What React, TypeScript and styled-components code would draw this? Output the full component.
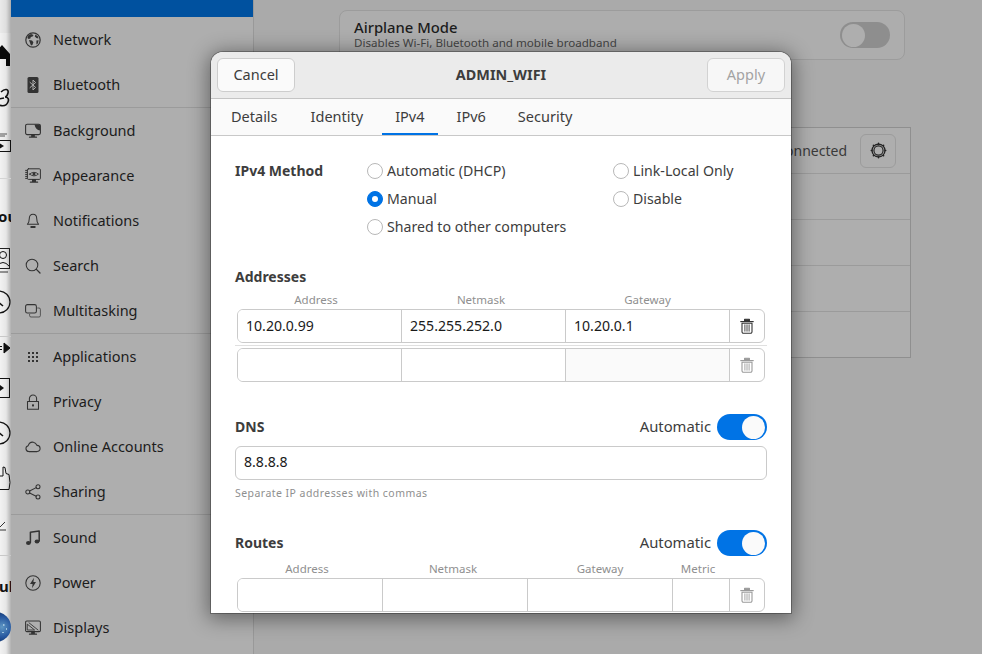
import React from 'react';
import styled, { createGlobalStyle } from 'styled-components';

const Font = '"Noto Sans", "Open Sans", sans-serif';

const GlobalStyle = createGlobalStyle`
  html, body {
    margin: 0;
    height: 100%;
    overflow: hidden;
    background: #aaaaaa;
    font-family: ${Font};
  }
  * { box-sizing: border-box; }
`;

const Page = styled.div`
  position: relative;
  display: flex;
  width: 982px;
  height: 654px;
  overflow: hidden;
`;

/* sliver of the window behind the settings app */
const Strip = styled.div`
  flex: 0 0 11px;
  display: flex;
  flex-direction: column;
  overflow: hidden;
  background: linear-gradient(to right, #f2f2f2 0%, #e6e6e6 55%, #b2b2b2 100%);
  svg { display: block; flex: none; }
`;

const StripText = styled.div<{ $h: number; $shift: number }>`
  flex: none;
  height: ${p => p.$h}px;
  line-height: ${p => p.$h}px;
  margin-left: ${p => p.$shift}px;
  font-size: 15px;
  font-weight: 700;
  color: #111;
  white-space: nowrap;
`;

const Sidebar = styled.nav`
  flex: 0 0 243px;
  background: #aeaeae;
  border-right: 1px solid #999;
`;

const SelectedRow = styled.div`
  height: 17px;
  background: #00519f;
`;

const SideGroup = styled.div`
  border-bottom: 1px solid #9b9b9b;
  &:last-child { border-bottom: 0; }
`;

const SideRow = styled.div`
  display: flex;
  align-items: center;
  height: 45px;
  padding-left: 14px;
  gap: 12px;
  font-size: 14.5px;
  color: #1c1c1c;
  svg { flex: none; color: #333; }
`;

const SideLabel = styled.span`
  margin-bottom: 2px;
`;

const Main = styled.main`
  flex: 1;
  padding: 10px 0 0 85px;
  background: #aaaaaa;
`;

const AirplaneCard = styled.section`
  display: flex;
  align-items: center;
  justify-content: space-between;
  width: 566px;
  height: 50px;
  padding: 0 14px;
  background: #adadad;
  border: 1px solid #9c9c9c;
  border-radius: 8px;
`;

const CardText = styled.div`
  margin-bottom: 2px;
`;

const CardTitle = styled.div`
  font-size: 14.8px;
  font-weight: 500;
  line-height: 18px;
  color: #1c1c1c;
`;

const CardHint = styled.div`
  font-size: 11.6px;
  line-height: 14px;
  color: #454545;
`;

const NetworkTable = styled.section`
  width: 572px;
  margin-top: 67px;
  border: 1px solid #8f8f8f;
  background: #aeaeae;
`;

const NetworkRow = styled.div`
  display: flex;
  align-items: center;
  justify-content: flex-end;
  gap: 13px;
  height: 46px;
  padding-right: 14px;
  border-bottom: 1px solid #9b9b9b;
  font-size: 14px;
  color: #3a3a3a;
  &:last-child { border-bottom: 0; height: 45px; }
`;

const GearButton = styled.div`
  display: flex;
  align-items: center;
  justify-content: center;
  width: 36px;
  height: 34px;
  border: 1px solid #9c9c9c;
  border-radius: 6px;
  color: #222;
`;

const Dialog = styled.div`
  position: absolute;
  left: 211px;
  top: 52px;
  width: 580px;
  height: 561px;
  overflow: hidden;
  background: #fff;
  border-radius: 12px 12px 0 0;
  box-shadow: 0 0 0 1px rgba(0, 0, 0, 0.28), 0 3px 20px 3px rgba(0, 0, 0, 0.42);
  color: #3d3d3d;
`;

const DialogHeader = styled.header`
  display: flex;
  align-items: center;
  justify-content: space-between;
  height: 47px;
  padding: 0 6px;
  background: #ebebeb;
  border-bottom: 1px solid #c4c4c4;
`;

const HeaderButton = styled.div<{ $disabled?: boolean }>`
  display: flex;
  align-items: center;
  justify-content: center;
  width: 78px;
  height: 34px;
  padding-bottom: 2px;
  background: ${p => (p.$disabled ? '#f7f7f7' : '#fafafa')};
  border: 1px solid ${p => (p.$disabled ? '#d2d2d2' : '#cdcdcd')};
  border-radius: 6px;
  font-size: 14.5px;
  color: ${p => (p.$disabled ? '#a3a3a3' : '#3d3d3d')};
`;

const DialogTitle = styled.div`
  margin-bottom: 2px;
  font-size: 14.4px;
  font-weight: 700;
`;

const TabBar = styled.div`
  display: flex;
  height: 37px;
  padding-left: 7px;
  gap: 6px;
  background: #fafafa;
  border-bottom: 1px solid #c8c8c8;
`;

const Tab = styled.div<{ $active?: boolean }>`
  display: flex;
  align-items: center;
  padding: 0 13px;
  height: 36px;
  font-size: 14.5px;
  color: #3d3d3d;
  border-bottom: 2px solid ${p => (p.$active ? '#0073e5' : 'transparent')};
  &:nth-child(2) { margin-left: 1px; }
`;

const DialogBody = styled.div`
  padding: 24px 24px 0;
`;

const MethodRow = styled.div`
  display: flex;
`;

const SectionTitle = styled.div`
  font-size: 14px;
  font-weight: 700;
  line-height: 22px;
`;

const MethodTitle = styled(SectionTitle)`
  flex: 0 0 132px;
`;

const RadioColumn = styled.div<{ $w?: number }>`
  display: flex;
  flex-direction: column;
  gap: 6px;
  flex: 0 0 ${p => p.$w ?? 150}px;
`;

const RadioRow = styled.div`
  display: flex;
  align-items: center;
  gap: 4px;
  height: 22px;
  font-size: 14.15px;
`;

const RadioLabel = styled.span`
  margin-bottom: 2px;
`;

const RadioDot = styled.span<{ $on?: boolean }>`
  display: flex;
  align-items: center;
  justify-content: center;
  width: 16px;
  height: 16px;
  border-radius: 50%;
  background: ${p => (p.$on ? '#0073e5' : '#fff')};
  border: 1px solid ${p => (p.$on ? '#0073e5' : '#b8b8b8')};
  &::after {
    content: '';
    display: ${p => (p.$on ? 'block' : 'none')};
    width: 6px;
    height: 6px;
    border-radius: 50%;
    background: #fff;
  }
`;

const PlainSection = styled.div<{ $top: number }>`
  margin-top: ${p => p.$top}px;
`;

const SwitchHeader = styled.div<{ $top: number }>`
  display: flex;
  align-items: center;
  height: 26px;
  margin-top: ${p => p.$top}px;
`;

const AutoLabel = styled.div`
  margin: 0 6px 2px auto;
  font-size: 14.8px;
`;

const Switch = styled.div<{ $on?: boolean }>`
  display: flex;
  justify-content: ${p => (p.$on ? 'flex-end' : 'flex-start')};
  align-items: center;
  width: 50px;
  height: 26px;
  padding: 1px 2px;
  border-radius: 13px;
  background: ${p => (p.$on ? '#0073e5' : '#8e8e8e')};
  &::after {
    content: '';
    width: 23px;
    height: 23px;
    border-radius: 50%;
    background: ${p => (p.$on ? '#fafafa' : '#aeaeae')};
  }
`;

const ColumnHeads = styled.div<{ $cols: string; $top: number }>`
  display: grid;
  grid-template-columns: ${p => p.$cols};
  height: 18px;
  margin: ${p => p.$top}px 2px 0;
  font-size: 11.5px;
  line-height: 18px;
  color: #8f8f8f;
  text-align: center;
`;

const EntryRow = styled.div<{ $cols: string }>`
  display: grid;
  grid-template-columns: ${p => p.$cols};
  height: 34px;
  margin: 0 2px;
  border: 1px solid #cacaca;
  border-radius: 6px;
  overflow: hidden;
`;

const EntryCell = styled.div<{ $shaded?: boolean }>`
  display: flex;
  align-items: center;
  padding: 0 0 2px 8px;
  font-size: 14.1px;
  color: #1a1a1a;
  background: ${p => (p.$shaded ? '#fafafa' : '#fff')};
  border-right: 1px solid #cacaca;
`;

const DeleteCell = styled.div<{ $dim?: boolean }>`
  display: flex;
  align-items: center;
  justify-content: center;
  color: ${p => (p.$dim ? '#9a9a9a' : '#333')};
`;

const RowRule = styled.div`
  height: 1px;
  margin: 2px 0;
  background: #e0e0e0;
`;

const TextInput = styled.div`
  display: flex;
  align-items: center;
  height: 34px;
  margin-top: 6px;
  padding: 0 0 3px 8px;
  border: 1px solid #cacaca;
  border-radius: 6px;
  font-size: 14.1px;
  color: #1a1a1a;
`;

const Hint = styled.div`
  margin-top: 5px;
  font-size: 10.5px;
  line-height: 16px;
  letter-spacing: 0.45px;
  color: #8f8f8f;
`;

const Icon: React.FC<{ children: React.ReactNode; size?: number }> = ({ children, size = 16 }) => (
  <svg
    width={size}
    height={size}
    viewBox="0 0 16 16"
    fill="none"
    stroke="currentColor"
    strokeWidth="1"
    strokeLinecap="round"
    strokeLinejoin="round"
  >
    {children}
  </svg>
);

const GlobeIcon = () => (
  <Icon>
    <circle cx="8" cy="8" r="7.2" strokeWidth="1.2" />
    <path
      d="M3 3.6 6 2l2.6 1-1 1.6-1.8.4-.4 1.6L3.6 7 2.4 6zM4 8l3 .6 1.4 1.6L7.4 13 6 13.4 5 11zM10.4 2.6l2.6 2 .4 2-2-.6-1.6-1.6zM11.4 8.6l2.2-.4-.6 3-1.6 1.2z"
      fill="currentColor"
      stroke="none"
    />
  </Icon>
);

const BluetoothIcon = () => (
  <Icon>
    <rect x="2.5" y="0" width="11" height="16" rx="1.5" fill="currentColor" stroke="none" />
    <path d="M5 5.4 10.6 10.4 8 13V3l2.6 2.6L5 10.6" stroke="#aeaeae" strokeWidth="1" />
  </Icon>
);

const BackgroundIcon = () => (
  <Icon>
    <rect x="0.6" y="1.2" width="14.8" height="10.4" rx="1.6" strokeWidth="1.1" />
    <path d="M9.5 1.4h4.6l1.1 1v5.2Q10.500 7 9.500 1.400z" fill="currentColor" stroke="none" />
    <path d="M6.800 11.800h2.400v2H6.800zM4.500 14.200h7" strokeWidth="1.2" fill="currentColor" />
  </Icon>
);

const AppearanceIcon = () => (
  <Icon>
    <rect x="2.4" y="0.8" width="13" height="10.6" rx="1" strokeWidth="1" />
    <path d="M0.6 2.4h1.4M0.6 4.4h1.4M0.6 6.4h1.4M0.6 8.4h1.4M0.6 10.4h1.4" strokeWidth="1" />
    <path d="M4.6 6.1Q9 2.4 13.4 6.1 9 9.8 4.6 6.1z" strokeWidth="0.9" />
    <circle cx="9" cy="6.1" r="1.5" fill="currentColor" stroke="none" />
    <path d="M7.6 11.6h2.8v2H7.6zM5.4 14.2h7.2" strokeWidth="1.2" fill="currentColor" />
  </Icon>
);

const BellIcon = () => (
  <Icon>
    <path d="M8 1.2c-2.6 0-3.7 2-3.7 4.3 0 2.8-.8 4.6-1.900 5.800h11.200c-1.100-1.200-1.900-3-1.900-5.800C11.700 3.200 10.600 1.200 8 1.200z" strokeWidth="1.05" />
    <path d="M6.200 14h3.600" strokeWidth="1.8" />
  </Icon>
);

const SearchIcon = () => (
  <Icon>
    <circle cx="7" cy="7" r="5.8" strokeWidth="1.05" />
    <path d="m11.4 11.4 3.6 3.6" strokeWidth="1.3" />
  </Icon>
);

const WindowsIcon = () => (
  <Icon>
    <rect x="0.6" y="1.6" width="10.8" height="8.4" rx="1.8" strokeWidth="1.05" />
    <path d="M12.6 5H14a1.4 1.4 0 0 1 1.4 1.4v6.2a1.4 1.4 0 0 1-1.4 1.4H6a1.4 1.4 0 0 1-1.4-1.4V11.4" strokeWidth="0.9" opacity="0.8" />
  </Icon>
);

const AppsIcon = () => (
  <Icon>
    {[3, 7, 11].map(y =>
      [3, 7, 11].map(x => <rect key={`${x}-${y}`} x={x} y={y} width="2" height="2" fill="currentColor" stroke="none" />),
    )}
  </Icon>
);

const LockIcon = () => (
  <Icon>
    <rect x="2.5" y="7.4" width="11" height="7.8" strokeWidth="1.05" />
    <path d="M4.4 7.2V4.6a3.6 3.6 0 0 1 7.2 0v2.600" strokeWidth="1.05" />
    <rect x="7" y="10.4" width="2" height="2" fill="currentColor" stroke="none" />
  </Icon>
);

const CloudIcon = () => (
  <Icon>
    <path d="M3.8 12.6a3 3 0 0 1-.6-5.9C4 4.2 6 2.8 8.4 3.2c1.8.3 3 1.6 3.5 3.2a3.1 3.1 0 0 1 .2 6.2z" strokeWidth="1.05" />
  </Icon>
);

const ShareIcon = () => (
  <Icon>
    <circle cx="2.8" cy="8" r="2" strokeWidth="1.05" />
    <circle cx="13" cy="2.8" r="2" strokeWidth="1.05" />
    <circle cx="13" cy="13" r="2" strokeWidth="1.05" />
    <path d="m4.6 7 6.6-3.4M4.6 9l6.6 3.2" strokeWidth="1.05" />
  </Icon>
);

const MusicIcon = () => (
  <Icon>
    <path d="M5.4 12.4V2.200L14.200 1v10" strokeWidth="1.5" />
    <ellipse cx="3.4" cy="13" rx="2.4" ry="2" fill="currentColor" stroke="none" />
    <ellipse cx="12" cy="11.6" rx="2.4" ry="2" fill="currentColor" stroke="none" />
  </Icon>
);

const PowerIcon = () => (
  <Icon>
    <circle cx="8" cy="8" r="7.2" strokeWidth="1.05" />
    <path d="M9 2.800 5 9h2.600L7 13.200 11 7H8.400z" fill="currentColor" stroke="none" />
  </Icon>
);

const DisplaysIcon = () => (
  <Icon>
    <rect x="0.6" y="1" width="14.8" height="10.6" rx="1.2" strokeWidth="1.05" />
    <path d="M2.600 4.400 9.600 10H2.600z" strokeWidth="0.9" />
    <path d="M4 2.800 13 10" strokeWidth="0.9" />
    <path d="M6.800 11.800h2.400v2H6.800zM4.500 14.200h7" strokeWidth="1.2" fill="currentColor" />
  </Icon>
);

const TrashIcon = () => (
  <Icon size={16}>
    <path d="M1.800 3.600h12.400" strokeWidth="1.3" />
    <path d="M5.600 3V1.200h4.800V3" strokeWidth="1.1" fill="currentColor" />
    <path d="M3 5.200h10v8.600a1.400 1.400 0 0 1-1.400 1.400H4.400A1.400 1.400 0 0 1 3 13.800z" strokeWidth="1.1" />
    <path d="M5.900 6.800v6.400M8 6.800v6.400M10.100 6.800v6.400" strokeWidth="0.9" />
  </Icon>
);

const GearIcon = () => (
  <Icon size={17}>
    <circle cx="8" cy="8" r="6.1" strokeWidth="1.2" />
    <circle cx="8" cy="8" r="4.3" strokeWidth="1.1" />
    <path d="M8 1.200v.6M8 14.200v.6M1.200 8h.6M14.200 8h.6M3.200 3.200l.4.4M12.400 12.400l.4.4M12.800 3.200l-.4.4M3.600 12.400l-.4.4" strokeWidth="1.4" />
  </Icon>
);

const StripTop = () => (
  <svg width="11" height="205" viewBox="0 0 11 205">
    <rect y="0" width="11" height="33" fill="#000" opacity="0.03" />
    <path d="M-6 54 2 45l8 9v12H6v-7H0v7h-6z" fill="#0a0a0a" />
    <path d="M1 92c4-4 8-3 7 1s-3 4-3 4 5 0 3 5-6 4-9 3M-1 99l5-1" fill="none" stroke="#111" strokeWidth="1.6" />
    <path d="M-2 134H7M-2 136H5" stroke="#555" strokeWidth="1" />
    <rect x="-3" y="140.500" width="13.500" height="11" fill="none" stroke="#111" />
    <path d="M0 143.500 4 146l-4 2.500z" fill="#111" />
    <path d="M0 178.500H11" stroke="#d4d4d4" />
  </svg>
);

const StripMiddle = () => (
  <svg width="11" height="347" viewBox="0 228 11 347">
    <rect x="-8" y="248.500" width="17.500" height="20" fill="none" stroke="#222" />
    <circle cx="3" cy="255" r="3.500" fill="none" stroke="#111" />
    <path d="M-3 266q6-7 12 0" fill="none" stroke="#111" />
    <path d="M-4 272H8" stroke="#333" />
    <circle cx="-1" cy="302" r="11" fill="none" stroke="#111" strokeWidth="1.2" />
    <path d="M-2 302l5 4" stroke="#111" strokeWidth="1.6" />
    <path d="M0 336.500H11" stroke="#c8c8c8" />
    <path d="M0 346.500H2M0 349.500H2M4 343l6 5-6 5z" fill="#111" stroke="#111" />
    <rect x="-4" y="378.500" width="13.500" height="19" fill="none" stroke="#111" />
    <path d="M0 385 4 388l-4 3z" fill="#111" />
    <circle cx="-1" cy="433" r="11" fill="none" stroke="#111" strokeWidth="1.2" />
    <path d="M-2 432l5 4" stroke="#111" strokeWidth="1.6" />
    <path d="M-2 476h5v-9l2 .5 1 6 3 1 1 8-1 7h-11" fill="none" stroke="#111" strokeWidth="1" />
    <path d="M0 527 5 522M0 530H6" stroke="#333" />
    <path d="M0 555.500H11" stroke="#c8c8c8" />
  </svg>
);

const StripBottom = () => (
  <svg width="11" height="57" viewBox="0 597 11 57">
    <defs>
      <radialGradient id="avatar" cx="0.7" cy="0.5" r="0.6">
        <stop offset="0" stopColor="#5f97c4" />
        <stop offset="0.55" stopColor="#27589f" />
        <stop offset="1" stopColor="#0c2c62" />
      </radialGradient>
    </defs>
    <circle cx="-4" cy="627" r="15" fill="url(#avatar)" />
    <path d="M3 624h1.500v2H3zM6 628h1v2H6zM2 632h2v1H2z" fill="#9fc4de" />
  </svg>
);

type SideItem = { label: string; icon: React.ReactNode };

const sideGroups: SideItem[][] = [
  [
    { label: 'Network', icon: <GlobeIcon /> },
    { label: 'Bluetooth', icon: <BluetoothIcon /> },
  ],
  [
    { label: 'Background', icon: <BackgroundIcon /> },
    { label: 'Appearance', icon: <AppearanceIcon /> },
    { label: 'Notifications', icon: <BellIcon /> },
    { label: 'Search', icon: <SearchIcon /> },
    { label: 'Multitasking', icon: <WindowsIcon /> },
  ],
  [
    { label: 'Applications', icon: <AppsIcon /> },
    { label: 'Privacy', icon: <LockIcon /> },
    { label: 'Online Accounts', icon: <CloudIcon /> },
    { label: 'Sharing', icon: <ShareIcon /> },
  ],
  [
    { label: 'Sound', icon: <MusicIcon /> },
    { label: 'Power', icon: <PowerIcon /> },
    { label: 'Displays', icon: <DisplaysIcon /> },
  ],
];

const tabs = ['Details', 'Identity', 'IPv4', 'IPv6', 'Security'];
const addressCols = '164px 164px 164px 1fr';
const addressHeads = '158px 172px 161px';
const routeCols = '145px 145px 145px 57px 1fr';
const routeHeads = '140px 152px 142px 54px';

const App: React.FC = () => (
  <Page>
    <GlobalStyle />
    <Strip>
      <StripTop />
      <StripText $h={23} $shift={-2}>ou</StripText>
      <StripMiddle />
      <StripText $h={22} $shift={-1}>ul</StripText>
      <StripBottom />
    </Strip>

    <Sidebar>
      <SelectedRow />
      {sideGroups.map(group => (
        <SideGroup key={group[0].label}>
          {group.map(item => (
            <SideRow key={item.label}>
              {item.icon}
              <SideLabel>{item.label}</SideLabel>
            </SideRow>
          ))}
        </SideGroup>
      ))}
    </Sidebar>

    <Main>
      <AirplaneCard>
        <CardText>
          <CardTitle>Airplane Mode</CardTitle>
          <CardHint>Disables Wi-Fi, Bluetooth and mobile broadband</CardHint>
        </CardText>
        <Switch />
      </AirplaneCard>
      <NetworkTable>
        <NetworkRow>
          Connected
          <GearButton>
            <GearIcon />
          </GearButton>
        </NetworkRow>
        <NetworkRow />
        <NetworkRow />
        <NetworkRow />
        <NetworkRow />
      </NetworkTable>
    </Main>

    <Dialog>
      <DialogHeader>
        <HeaderButton>Cancel</HeaderButton>
        <DialogTitle>ADMIN_WIFI</DialogTitle>
        <HeaderButton $disabled>Apply</HeaderButton>
      </DialogHeader>
      <TabBar>
        {tabs.map(tab => (
          <Tab key={tab} $active={tab === 'IPv4'}>
            {tab}
          </Tab>
        ))}
      </TabBar>
      <DialogBody>
        <MethodRow>
          <MethodTitle>IPv4 Method</MethodTitle>
          <RadioColumn $w={246}>
            <RadioRow><RadioDot /><RadioLabel>Automatic (DHCP)</RadioLabel></RadioRow>
            <RadioRow><RadioDot $on /><RadioLabel>Manual</RadioLabel></RadioRow>
            <RadioRow><RadioDot /><RadioLabel>Shared to other computers</RadioLabel></RadioRow>
          </RadioColumn>
          <RadioColumn>
            <RadioRow><RadioDot /><RadioLabel>Link-Local Only</RadioLabel></RadioRow>
            <RadioRow><RadioDot /><RadioLabel>Disable</RadioLabel></RadioRow>
          </RadioColumn>
        </MethodRow>

        <PlainSection $top={28}>
          <SectionTitle>Addresses</SectionTitle>
        </PlainSection>
        <ColumnHeads $cols={addressHeads} $top={3}>
          <span>Address</span>
          <span>Netmask</span>
          <span>Gateway</span>
        </ColumnHeads>
        <EntryRow $cols={addressCols}>
          <EntryCell>10.20.0.99</EntryCell>
          <EntryCell>255.255.252.0</EntryCell>
          <EntryCell>10.20.0.1</EntryCell>
          <DeleteCell><TrashIcon /></DeleteCell>
        </EntryRow>
        <RowRule />
        <EntryRow $cols={addressCols}>
          <EntryCell />
          <EntryCell />
          <EntryCell $shaded />
          <DeleteCell $dim><TrashIcon /></DeleteCell>
        </EntryRow>

        <SwitchHeader $top={32}>
          <SectionTitle>DNS</SectionTitle>
          <AutoLabel>Automatic</AutoLabel>
          <Switch $on />
        </SwitchHeader>
        <TextInput>8.8.8.8</TextInput>
        <Hint>Separate IP addresses with commas</Hint>

        <SwitchHeader $top={29}>
          <SectionTitle>Routes</SectionTitle>
          <AutoLabel>Automatic</AutoLabel>
          <Switch $on />
        </SwitchHeader>
        <ColumnHeads $cols={routeHeads} $top={4}>
          <span>Address</span>
          <span>Netmask</span>
          <span>Gateway</span>
          <span>Metric</span>
        </ColumnHeads>
        <EntryRow $cols={routeCols}>
          <EntryCell />
          <EntryCell />
          <EntryCell />
          <EntryCell />
          <DeleteCell $dim><TrashIcon /></DeleteCell>
        </EntryRow>
      </DialogBody>
    </Dialog>
  </Page>
);

export default App;
